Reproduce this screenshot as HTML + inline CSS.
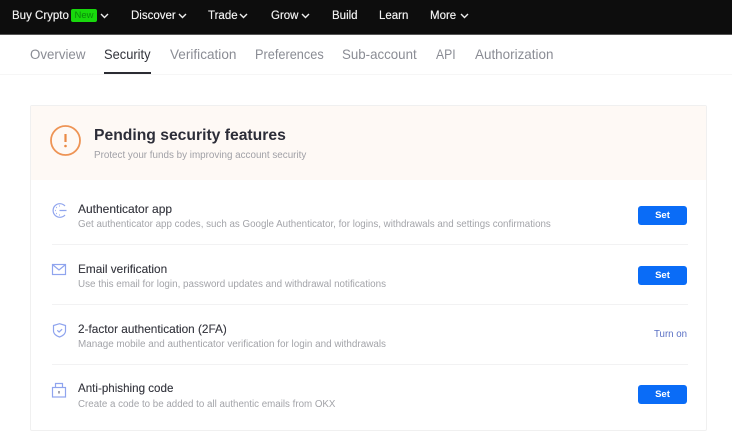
<!DOCTYPE html>
<html><head><meta charset="utf-8">
<style>
html,body{margin:0;padding:0;background:#fff}
body{width:732px;height:437px;position:relative;overflow:hidden;font-family:"Liberation Sans",sans-serif}
#w{position:absolute;left:0;top:0;width:732px;height:437px;filter:blur(.35px)}
.t{position:absolute;white-space:nowrap}
.n{top:8px;line-height:16px;font-size:11.5px;color:#f0f0f0;text-shadow:0 0 .4px #f0f0f0}
.tab{top:46px;line-height:16px;font-size:14px;color:#8a8c94;transform-origin:0 50%}
.h{font-size:11.8px;line-height:14px;color:#3d3e46;text-shadow:0 0 .3px #3d3e46}
.d{font-size:9.78px;line-height:12px;color:#a3a4a9}
.b{position:absolute;left:638px;width:49px;height:19px;background:#0a6cf7;border-radius:3px;color:#fff;font-size:9.5px;font-weight:bold;line-height:19px;text-align:center}
.l{position:absolute;left:52px;width:636px;height:1px;background:#f2f2f3}
svg{position:absolute;overflow:visible}
</style></head><body><div id="w">
<div style="position:absolute;left:0;top:0;width:732px;height:34px;background:#0d0d0d"></div>
<div style="position:absolute;left:0;top:34px;width:732px;height:1px;background:#555"></div>
<span class="t n" style="left:12px">Buy Crypto</span>
<div class="t" style="left:71px;top:9px;width:26px;height:13px;background:#18d80c;border-radius:2px;color:#0b8a0a;font-size:9.5px;line-height:13px;text-align:center">New</div>
<span class="t n" style="left:131px">Discover</span>
<span class="t n" style="left:208px">Trade</span>
<span class="t n" style="left:271px">Grow</span>
<span class="t n" style="left:332px">Build</span>
<span class="t n" style="left:379px">Learn</span>
<span class="t n" style="left:430px">More</span>
<svg style="left:0;top:0" width="732" height="34" fill="none" stroke="#eee" stroke-width="1.4"><path d="M101 14l3.500 3.500 3.500-3.500M179 14l3.500 3.500 3.500-3.500M240 14l3.500 3.500 3.500-3.500M302 14l3.500 3.500 3.500-3.500M461 14l3.500 3.500 3.500-3.500"/></svg>

<span class="t tab" style="left:30px;top:45.500px;transform:scaleX(.95)">Overview</span>
<span class="t tab" style="left:104px;top:45.500px;color:#33343c;transform:scaleX(.92)">Security</span>
<span class="t tab" style="left:170px;top:45.500px;transform:scaleX(.97)">Verification</span>
<span class="t tab" style="left:255px;top:45.500px;transform:scaleX(.91)">Preferences</span>
<span class="t tab" style="left:342px;top:45.500px;transform:scaleX(.95)">Sub-account</span>
<span class="t tab" style="left:436px;top:45.500px;transform:scaleX(.87)">API</span>
<span class="t tab" style="left:475px;top:45.500px;transform:scaleX(.96)">Authorization</span>
<div style="position:absolute;left:104px;top:72px;width:47px;height:2px;background:#2b2c33"></div>
<div style="position:absolute;left:0;top:74px;width:732px;height:1px;background:#f6f6f6"></div>

<div style="position:absolute;left:30px;top:105px;width:675px;height:324px;border:1px solid #f0f0f0;border-radius:2px"></div>
<div style="position:absolute;left:31px;top:106px;width:675px;height:74px;background:#fef9f5"></div>
<svg style="left:50px;top:125px" width="32" height="32" fill="none"><circle cx="15.500" cy="15.500" r="14.500" stroke="#ee9455" stroke-width="1.800"/><path d="M15.500 9v8" stroke="#ea8a45" stroke-width="2.200"/><circle cx="15.500" cy="21" r="1.300" fill="#ea8a45"/></svg>
<span class="t" style="left:94px;top:126px;font-size:15.7px;line-height:20px;font-weight:bold;color:#2c2d38">Pending security features</span>
<span class="t d" style="left:94px;top:150px;font-size:9.85px;color:#a0a0a6">Protect your funds by improving account security</span>

<svg style="left:52px;top:203px" width="15" height="15" fill="none" stroke="#8fa4ee" stroke-width="1.200"><path d="M13 3A6.800 6.800 0 1 0 13 12M7.500 7.500H14.500" /><path d="M4 4.500h.8M3 7.500h.8M4 10.500h.8M7 3h.8M7 12h.8"/></svg>
<span class="t h" style="left:78px;top:202px;font-size:12px">Authenticator app</span>
<span class="t d" style="left:78px;top:219px">Get authenticator app codes, such as Google Authenticator, for logins, withdrawals and settings confirmations</span>
<div class="b" style="top:206px">Set</div>
<div class="l" style="top:244px"></div>

<svg style="left:52px;top:264px" width="15" height="12" fill="none" stroke="#8fa4ee" stroke-width="1.200"><rect x=".5" y=".5" width="13" height="10"/><path d="M1 1l6 5 6-5"/></svg>
<span class="t h" style="left:78px;top:262px">Email verification</span>
<span class="t d" style="left:78px;top:279px;font-size:9.85px">Use this email for login, password updates and withdrawal notifications</span>
<div class="b" style="top:266px">Set</div>
<div class="l" style="top:304px"></div>

<svg style="left:53px;top:323px" width="14" height="15" fill="none" stroke="#8fa4ee" stroke-width="1.200"><path d="M6.500 .7L12.500 2.500V8C12.500 11 9 13.300 6.500 14 4 13.300 .5 11 .5 8V2.500Z"/><path d="M4.300 7.300l1.800 1.700 3-2.800"/></svg>
<span class="t h" style="left:78px;top:322px">2-factor authentication (2FA)</span>
<span class="t d" style="left:78px;top:339px;font-size:9.9px">Manage mobile and authenticator verification for login and withdrawals</span>
<span class="t" style="left:654px;top:329px;font-size:9.7px;line-height:12px;color:#5a70c4">Turn on</span>
<div class="l" style="top:364px"></div>

<svg style="left:52px;top:382px" width="15" height="16" fill="none" stroke="#8fa4ee" stroke-width="1.200"><rect x=".5" y="5.500" width="13" height="9.500"/><path d="M3.500 5V1.500H10.500V5"/><path d="M7 9v2.500" stroke="#667"/></svg>
<span class="t h" style="left:78px;top:382px;font-size:11.6px">Anti-phishing code</span>
<span class="t d" style="left:78px;top:399px;font-size:9.75px">Create a code to be added to all authentic emails from OKX</span>
<div class="b" style="top:385px">Set</div>
</div></body></html>
